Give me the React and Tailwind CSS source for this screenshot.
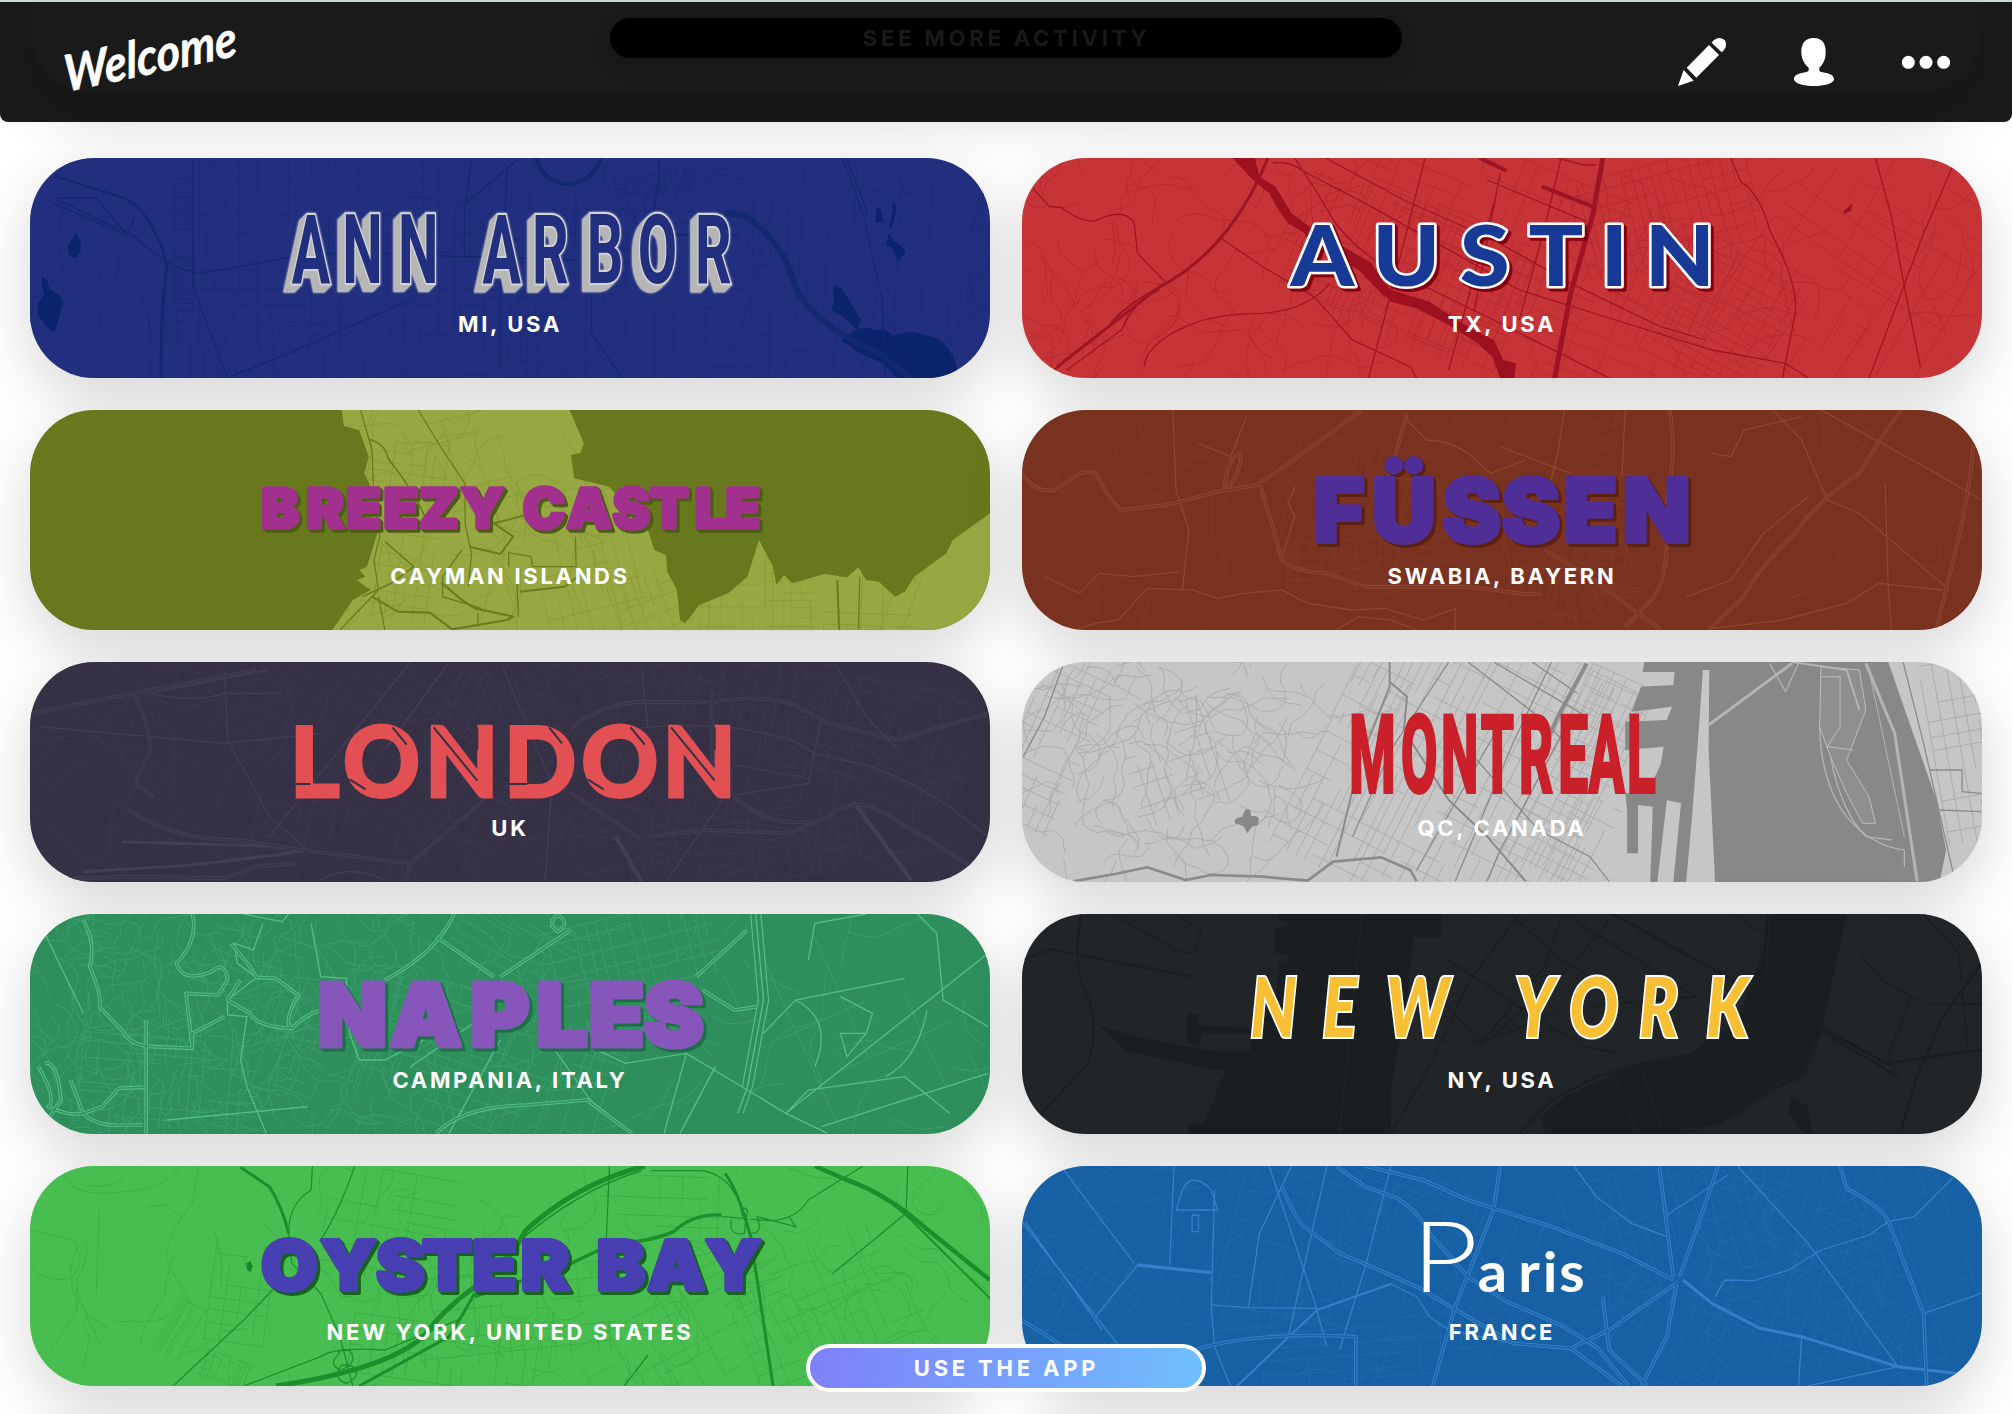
import React from "react";

// Card artwork is described on a 1496 x 660 sheet that is fitted to a 960 x 220 card.
const KX = 960 / 1496;
const KY = 220 / 660;

function random(seed) {
  let s = seed;
  return () => {
    s = (s * 1664525 + 1013904223) % 4294967296;
    return s / 4294967296;
  };
}

// A rotated block of streets: [centre x, centre y, width, height, angle, column gap, row gap, keep]
function blocks(seed, list) {
  const rnd = random(seed);
  let d = "";
  list.forEach(([cx, cy, w, h, angle, gx, gy, keep]) => {
    const c = Math.cos((angle * Math.PI) / 180);
    const s = Math.sin((angle * Math.PI) / 180);
    const p = (x, y) => `${(cx + x * c - y * s).toFixed(1)} ${(cy + x * s + y * c).toFixed(1)}`;
    for (let x = -w / 2; x <= w / 2; x += gx * (0.7 + rnd() * 0.6)) {
      for (let y = -h / 2; y < h / 2; ) {
        const len = gy * (1 + Math.floor(rnd() * 5));
        if (rnd() < keep) d += `M${p(x, y)}L${p(x, Math.min(y + len, h / 2))}`;
        y += len;
      }
    }
    for (let y = -h / 2; y <= h / 2; y += gy * (0.7 + rnd() * 0.6)) {
      for (let x = -w / 2; x < w / 2; ) {
        const len = gx * (1 + Math.floor(rnd() * 5));
        if (rnd() < keep) d += `M${p(x, y)}L${p(Math.min(x + len, w / 2), y)}`;
        x += len;
      }
    }
  });
  return d;
}

// Winding lanes inside a box
function lanes(seed, n, x0, y0, w, h, turn = 0.9) {
  const rnd = random(seed);
  let d = "";
  for (let i = 0; i < n; i++) {
    let x = x0 + rnd() * w;
    let y = y0 + rnd() * h;
    let a = rnd() * 6.28;
    d += `M${x.toFixed(1)} ${y.toFixed(1)}`;
    const steps = 3 + Math.floor(rnd() * 7);
    for (let k = 0; k < steps; k++) {
      a += (rnd() - 0.5) * turn;
      const mx = x + Math.cos(a) * 7;
      const my = y + Math.sin(a) * 7;
      a += (rnd() - 0.5) * turn;
      x = mx + Math.cos(a) * 7;
      y = my + Math.sin(a) * 7;
      d += `Q${mx.toFixed(1)} ${my.toFixed(1)} ${x.toFixed(1)} ${y.toFixed(1)}`;
    }
  }
  return d;
}

const cities = [
  {
    name: "ANN ARBOR", place: "MI, USA", ox: 47, oy: 474, bg: "bg-[#222f7f]",
    thin: "#1d2b78", line: "#12286f", solid: "#0a236c",
    minor: blocks(3, [[300, 90, 330, 200, 0, 14, 15, 0.5], [330, 190, 420, 90, -2, 13, 17, 0.5], [630, 130, 300, 190, 1, 17, 16, 0.45], [650, 22, 130, 26, -5, 6, 6, 0.6], [155, 90, 22, 130, 0, 22, 4, 0.8], [850, 90, 160, 160, 3, 24, 22, 0.4]]) + lanes(5, 90, 0, 0, 960, 220),
    shapes: ["M118 698l8 25 0 30-8 22-10-10-2-25z", "M66 828l8 15 3 25 14 15 8 20-6 45-8 50-12-18-14-35 0-35 10-25-4-30z", "M1390 612Q1400 605 1396 640L1390 685L1385 680Q1394 640 1390 612z", "M1366 625L1372 625L1377 668L1364 666z", "M1385 700l10 25 14 20 2 15-12 24-8-40-10-10z", "M1298 855l14 10 22 70 8 25-6 30-22-40-18-20 4-25z", "M1335 990Q1350 975 1362 990Q1385 985 1392 1008Q1420 985 1440 1005Q1470 1010 1482 1060Q1492 1090 1494 1134L1400 1134L1375 1090L1340 1060L1310 1020z"],
    bold: [["M85 528L195 595Q225 625 245 710Q258 760 260 800Q250 930 251 1134", 2.6], ["M835 474Q848 550 890 553Q925 540 937 474", 4], ["M1130 640L1160 645Q1220 720 1240 860Q1265 970 1370 1060L1420 1134", 6], ["M1027 474Q1030 560 1015 650L1055 705L1150 705", 2]],
    roads: ["M85 595L210 710Q280 830 320 818L400 790L470 765L580 760L720 770L900 780", "M85 610L200 708", "M90 594L150 594L170 640Q190 690 200 700L210 650", "M301 474L301 860L355 1134", "M735 474L726 610L810 474", "M724 610L724 770L780 770L780 1110", "M790 500L785 770", "M922 880L922 1000L970 1134", "M1313 474L1345 640L1375 900L1380 1134", "M1320 474L1352 640", "M640 900L450 1060L360 1130"],
    text: [["ANN ARBOR", [485, 565, 652, 0, 782, 858, 943, 1025, 1112], 849, 97, 0.59, 0]],
    fx: "[filter:drop-shadow(-1px_1px_0_#b6b6b6)_drop-shadow(-2px_2px_0_#b6b6b6)_drop-shadow(-4px_4px_0_#b6b6b6)_drop-shadow(0_0_0.8px_#dcdcdc)]",
    cls: "fill-[#222f7f] stroke-[#d4d4d4] stroke-[4px] font-[Roboto] font-bold [paint-order:stroke]",
  },
  {
    name: "AUSTIN", place: "TX, USA", ox: 25, oy: 474, bg: "bg-[#c63437]",
    thin: "#b62a32", line: "#9f1425", solid: "#9c1020",
    minor: blocks(11, [[490, 110, 420, 210, 22, 12, 14, 0.55], [640, 55, 190, 100, -15, 9, 13, 0.7], [700, 160, 120, 130, 28, 12, 8, 0.6], [800, 120, 150, 200, 35, 26, 20, 0.5], [880, 120, 130, 200, 30, 30, 28, 0.5], [400, 120, 200, 140, 22, 9, 15, 0.6]]) + lanes(12, 80, 0, 0, 330, 220, 1.2) + lanes(13, 30, 560, 0, 400, 220),
    shapes: ["M353 474L388 474L395 530L420 560L445 640L480 690L470 705L440 670L425 630L410 580L385 540z", "M560 790L600 870L660 905L720 980L760 1020L775 1080L795 1090L792 1134L770 1134L758 1070L735 1030L690 975L640 925L600 905L550 800z", "M455 660L490 700L570 790L600 880L590 890L550 810L470 720z", "M1305 635l14-25-2 22-12 10z"],
    bold: [["M408 474Q385 590 345 690Q300 800 240 860L80 1100", 3], ["M250 850Q180 920 160 980L75 1110", 2], ["M240 870Q200 900 180 990L95 1110", 1.5], ["M930 474L915 640L880 880L855 1134", 5], ["M738 474L780 512", 4], ["M835 560L915 620", 4]],
    roads: ["M415 490Q440 480 460 510L560 610L700 760L800 870L950 960L1100 1050L1215 1090L1250 1134", "M498 474L620 600L760 720L880 850L1020 980L1090 1020", "M450 474Q480 560 510 660Q540 740 590 800L760 960L940 1134", "M42 565L68 620L85 622Q120 670 140 662Q185 620 200 670L205 760L250 850", "M335 715L400 800L480 890L540 1020L630 1100L640 1134", "M505 850Q470 930 400 940Q340 940 300 965Q220 1020 215 1100", "M653 474L600 880L565 1134", "M1130 474L1145 545Q1175 580 1190 690Q1235 850 1230 940L1210 1134", "M1355 474L1380 650L1400 860L1425 1100", "M1475 500L1430 700L1385 930L1345 1134", "M760 610L690 1110", "M860 474L900 495L920 495", "M770 520L730 930", "M865 474L840 680L800 960", "M750 540L905 665"],
    text: [["AUSTIN", [493, 624, 746, 857, 948, 1050], 858, 84, 1.08, 0]],
    fx: "[filter:drop-shadow(2px_2px_0_#86000f)_drop-shadow(1px_1px_0_#86000f)]",
    cls: "fill-[#173a96] stroke-white stroke-[5px] [stroke-linejoin:round] font-[Lato] font-black [paint-order:stroke]",
    core: "#173a96",
  },
  {
    name: "BREEZY CASTLE", place: "CAYMAN ISLANDS", ox: 47, oy: 60, bg: "bg-[#68781c]",
    thin: "#8a9b38", line: "#6b7b1d", solid: "#97a843",
    shapes: ["M533 60L888 60L910 160L905 188L890 195L895 265L950 290L975 350L990 400L1010 420L1020 480L1038 495L1040 545L1055 600L1060 690L1068 700L1090 645L1135 610L1165 560L1183 450L1205 530L1210 585L1222 555L1235 580L1285 552L1320 562L1338 532L1350 570L1370 575L1395 620L1410 605L1425 560L1475 490L1485 450L1543 370L1543 720L518 720L550 630L578 600L556 570L570 560L560 540L572 530L590 420L575 370L578 290L568 250L575 200L560 120L536 108z"],
    over: true,
    clip: true,
    minor: blocks(21, [[370, 120, 80, 180, 8, 10, 12, 0.45], [440, 60, 110, 110, -15, 24, 24, 0.5], [560, 170, 100, 110, -14, 15, 17, 0.6], [620, 195, 70, 60, -20, 12, 16, 0.6], [700, 190, 60, 70, 0, 12, 18, 0.6], [760, 185, 50, 80, 0, 9, 9, 0.6], [840, 180, 90, 100, 2, 11, 14, 0.5], [900, 170, 60, 130, 20, 28, 40, 0.4]]) + lanes(22, 40, 330, 0, 260, 220),
    bold: [["M575 148Q600 160 605 205L630 270L655 350L670 410", 1.6], ["M732 470L780 492L800 440L770 400L830 370", 2], ["M565 620L610 580L645 530L600 455", 1.6], ["M580 620L620 665L670 668L705 718", 2.2], ["M688 578L720 630L740 655L800 680L790 690L705 718", 2.2], ["M810 605L880 590L900 560", 2], ["M1305 570L1308 720", 2]],
    roads: ["M562 60L580 180L583 330L592 440L583 510L590 600L560 660L530 720", "M652 60L690 180L725 280L725 400L735 490L730 590", "M720 480L690 560L690 620L750 655", "M897 440L898 530L830 530L828 500L793 488L793 530", "M805 540L808 680", "M1340 560L1338 720", "M590 620L600 720", "M745 670L745 710"],
    text: [["BREEZY CASTLE", [437, 507, 567, 625, 684, 752, 0, 848, 918, 984, 1043, 1108, 1158], 413, 55, 1.03, 0]],
    fx: "[filter:drop-shadow(2px_2px_0_#4d5c15)_drop-shadow(1px_1px_0_#4d5c15)]",
    cls: "fill-[#a2308f] stroke-[#a2308f] stroke-[3.6px] [stroke-linejoin:round] font-[Inter] font-black",
  },
  {
    name: "FÜSSEN", place: "SWABIA, BAYERN", ox: 25, oy: 60, bg: "bg-[#79321f]",
    thin: "#833925", line: "#904631", solid: "#79321f",
    minor: blocks(31, [[340, 100, 150, 130, 12, 15, 17, 0.4], [450, 120, 180, 90, 5, 17, 16, 0.4], [590, 80, 60, 160, 6, 12, 12, 0.5], [300, 150, 70, 60, 0, 10, 12, 0.4], [900, 90, 200, 300, 42, 50, 60, 0.4], [840, 30, 70, 50, 30, 16, 12, 0.4]]) + lanes(32, 26, 480, 180, 150, 36, 1.4) + lanes(33, 45, 0, 0, 960, 220),
    shapes: [],
    bold: [],
    base: "#7c3522",
    double: ["M25 250Q45 310 75 300L100 270Q120 235 140 250Q160 330 180 360L250 345L330 305L390 285L430 235L555 60", "M395 280Q415 400 430 510Q450 545 500 550L560 590L720 590L810 612L835 610", "M340 300Q345 200 365 190Q370 230 345 300", "M1035 60Q1045 200 1030 330Q1035 560 1010 620L965 712", "M1395 60Q1360 150 1330 250Q1260 340 1230 430Q1170 540 1150 620L1095 720", "M1508 160Q1500 330 1480 480L1450 720", "M625 70L595 280", "M840 480Q920 570 950 620L1020 718"],
    roads: ["M625 90L655 150Q690 150 720 190L755 250L810 210", "M450 290L440 340L450 380L430 500", "M375 80L350 200L300 160", "M1195 60L1240 150L1280 330L1330 370L1470 600", "M1370 280L1375 600L1380 720", "M60 560L115 610L145 550L200 560L270 545", "M110 718L140 700L175 690L220 595L290 600L330 625L370 610L430 600L470 640L540 660L590 655L650 690L700 655L700 720", "M515 718L550 680L600 690L640 720", "M770 170L880 250", "M1100 190L1130 200L1150 120L1240 80", "M1100 715L1210 690L1310 640L1360 580L1460 600", "M870 60L860 190L840 340", "M965 60L960 260", "M1270 60L1450 250L1520 330", "M260 60L265 300L285 420L275 600", "M1060 620L1130 570L1180 430L1250 320"],
    text: [["FÜSSEN", [519, 620, 726, 818, 911, 1014], 455, 88, 1.0, 0]],
    fx: "[filter:drop-shadow(2px_2px_0_#5c2013)_drop-shadow(1px_1px_0_#5c2013)]",
    cls: "fill-[#4f2e97] stroke-[#4f2e97] stroke-[4px] [stroke-linejoin:round] font-[Inter] font-black",
  },
  {
    name: "LONDON", place: "UK", ox: 47, oy: 36, bg: "bg-[#363045]",
    thin: "#3d374d", line: "#443e55", solid: "#423b52", base: "#39334a",
    minor: blocks(41, [[350, 60, 330, 200, 28, 10, 13, 0.5], [480, 40, 300, 90, -20, 13, 14, 0.5], [700, 90, 260, 180, 8, 12, 12, 0.45], [830, 60, 220, 130, 20, 14, 11, 0.45], [690, 190, 280, 70, -8, 11, 10, 0.45], [330, 190, 240, 80, 12, 12, 12, 0.4], [80, 110, 170, 200, 40, 30, 36, 0.5], [500, 130, 260, 160, 30, 12, 16, 0.4]]) + lanes(42, 120, 0, 0, 960, 220),
    shapes: [],
    bold: [["M130 665L300 645L430 615L480 600", 3], ["M190 575L440 590", 3], ["M960 560L1000 695", 4], ["M1330 455L1420 690", 4], ["M1100 330L1250 380", 1]],
    double: ["M50 190L220 125L400 60", "M890 235Q940 160 1000 155L1110 158Q1180 130 1240 165L1290 220L1400 270L1450 240L1540 190", "M1010 560L1100 540L1230 550L1290 500Q1320 450 1360 470L1440 560L1540 680", "M60 690L200 680L350 685L400 650L460 640", "M890 430L1000 570", "M205 120Q230 200 235 300L210 400L240 440", "M1110 120L1110 350L1150 450Q1200 530 1260 515", "M200 480Q270 570 370 570L470 600L640 640", "M630 695L640 640L760 440"],
    roads: ["M985 240Q1040 215 1150 235L1230 265L1270 310L1360 350L1420 400L1480 470L1540 560", "M235 130L420 60", "M235 130Q300 160 350 130L440 130", "M350 60L355 270L420 500L480 600", "M60 230L350 280L500 250", "M700 36L600 300", "M780 36L860 400L850 690", "M640 36L420 560", "M500 690Q540 640 600 690", "M1000 60L1010 230", "M1300 36L1350 200L1400 300", "M1040 690L1130 440L1260 400L1280 200"],
    text: [["LONDON", [491, 595, 720, 842, 966, 1090], 442, 98, 0.97, 0]],
    cuts: ["M450 402L484 402", "M612 232L634 284", "M545 388L570 418", "M676 232L744 392", "M744 232L744 300", "M784 402L822 402", "M856 232L876 280", "M983 232L1005 284", "M916 388L941 418", "M1046 232L1114 392", "M1114 232L1114 300"],
    fx: "",
    cls: "fill-[#e35053] stroke-[#e35053] stroke-[3px] font-[Lato] font-black",
  },
  {
    name: "MONTREAL", place: "QC, CANADA", ox: 25, oy: 36, bg: "bg-[#c6c6c6]",
    thin: "#adadad", line: "#8b8b8b", solid: "#888888",
    minor: blocks(51, [[440, 110, 280, 300, 27, 9, 20, 0.7], [350, 40, 60, 70, 27, 8, 14, 0.6], [30, 80, 70, 180, 25, 12, 14, 0.7], [150, 100, 90, 110, -18, 14, 12, 0.4], [580, 60, 80, 100, 24, 8, 14, 0.7], [540, 170, 90, 90, 27, 8, 12, 0.7], [940, 80, 60, 200, -10, 14, 16, 0.6]]) + lanes(52, 95, 30, 0, 250, 200, 1.5),
    shapes: ["M995 36L1375 36L1410 230L1450 450L1465 600L1455 696L1105 696L1095 300L1096 60L1086 60L1080 230L1070 480L1060 696L1040 696L1052 460L1030 450L1015 696L1004 696L1008 470L985 465L985 610L968 610L968 480L965 430L1000 425L1020 345L1025 290L965 300L965 215L1030 210L1038 170L975 185L990 110L1040 105L1042 66L992 66z", "M372 482Q378 472 381 484L382 498Q392 496 394 505L393 525L383 530L376 550L370 528L357 520Q353 505 368 500z"],
    lands: ["M1270 50L1330 60L1340 180L1310 330L1345 440L1355 520L1335 520L1310 430L1285 320L1268 230z"],
    after: true,
    bold: [["M105 694L170 672L220 652L280 690L320 675L400 680L470 692L510 635L585 622L630 660L640 694", 2.6], ["M905 40L860 200L830 330", 4], ["M598 95L625 140L620 240L690 450L750 560L810 694", 2], ["M598 36L598 110L550 340L515 620", 2]],
    roads: ["M90 40L60 200L27 320", "M690 36L600 300L540 560", "M720 36L830 200L900 330", "M780 190L640 660", "M850 36L790 280L700 694", "M820 36L890 130", "M720 300L830 540L910 620L940 694", "M870 240L770 600L750 694", "M760 36L905 200", "M1398 36L1430 280L1475 660L1480 696", "M1440 360L1490 360L1490 425L1520 430", "M1455 480L1520 485"],
    light: [["M1225 40L1095 225", 3], ["M1190 40L1215 125L1235 40", 1.3], ["M1225 36L1310 60L1330 180", 2], ["M1268 230Q1270 400 1310 500Q1350 590 1400 600L1400 650", 1.3], ["M1285 320Q1300 480 1340 560L1380 570", 1.3], ["M1340 40L1385 250L1420 694", 3], ["M1270 80L1300 80L1300 230L1280 290L1320 300", 1.2], ["M1345 60L1400 560", 1]],
    text: [["MONTREAL", [571, 644, 707, 766, 826, 884, 936, 990], 427, 108, 0.49, 0]],
    fx: "",
    cls: "fill-[#ca202a] stroke-[#ca202a] stroke-[4px] font-[Roboto] font-bold",
  },
  {
    name: "NAPLES", place: "CAMPANIA, ITALY", ox: 47, oy: 42, bg: "bg-[#2e8f5c]",
    thin: "#3a9f6a", line: "#56bf88", solid: "#49b27b", base: "#33935f",
    minor: blocks(61, [[600, 40, 180, 80, -14, 12, 14, 0.7], [480, 40, 120, 70, 30, 10, 10, 0.5], [460, 150, 260, 130, 18, 11, 13, 0.5], [600, 115, 80, 40, -14, 5, 4, 0.7], [140, 170, 180, 90, 5, 13, 11, 0.5], [300, 120, 160, 150, 20, 14, 14, 0.4], [820, 110, 190, 190, -24, 60, 45, 0.45]]) + lanes(62, 200, 0, 0, 420, 220, 1.6) + lanes(63, 40, 420, 0, 540, 220),
    shapes: [],
    bold: [["M1178 42L1190 300L1165 560L1150 640", 1.4], ["M1170 42L1182 300L1157 560", 1.2], ["M1186 42L1198 300L1173 560L1158 640", 1.2]],
    double: ["M130 60Q150 130 140 200Q160 290 155 320L190 390Q205 440 240 440L300 445L300 400Q320 380 350 350", "M300 42Q310 120 275 190Q285 250 330 215Q350 180 355 240L340 285L290 280L300 445", "M360 130L390 200L400 232L430 235L465 285Q440 370 455 385Q480 340 500 330", "M455 385Q400 380 390 340L355 300L375 240", "M60 500Q90 600 75 620Q110 650 130 640L160 620L185 565L225 562", "M110 540L130 640Q150 680 190 675L222 675", "M228 360L228 700", "M70 490Q90 480 95 600L75 660L110 700", "M680 700Q720 620 820 615L915 600L985 700", "M708 42Q680 160 600 240", "M680 110L770 230", "M890 90L780 230", "M870 45Q850 70 870 95Q890 70 870 45", "M1165 90L1085 230", "M1095 270L1145 330L1180 320"],
    roads: ["M380 42L440 65L450 42", "M410 70L395 150L365 130L370 190L400 232L355 300L355 345L385 350L375 480L385 560L415 700", "M485 70L500 230L540 235L545 400L560 480L600 480L680 400", "M865 450L920 600L985 700", "M920 440L975 490L1070 460L1225 640L1290 700", "M1225 640L1260 570L1410 530L1480 640", "M1070 460L1035 700", "M1115 500L1060 700", "M1190 400L1240 300L1410 235", "M1240 300Q1300 360 1270 500", "M1225 640L1540 160", "M1445 330Q1430 480 1380 530", "M1540 380L1470 300L1460 100L1430 42", "M1350 42L1270 70L1260 180", "M640 500L760 340", "M780 420L700 700", "M1280 680L1540 520", "M480 620L260 660", "M60 60L130 340", "M1310 290L1360 340L1350 400L1310 400L1320 470L1350 400"],
    text: [["NAPLES", [549, 664, 779, 876, 961, 1050], 437, 87, 1.04, 0]],
    fx: "[filter:drop-shadow(2px_2px_0_#1c7045)_drop-shadow(1px_1px_0_#1c7045)]",
    cls: "fill-[#8756bb] stroke-[#8756bb] stroke-[5px] [stroke-linejoin:round] font-[Inter] font-black",
  },
  {
    name: "NEW YORK", place: "NY, USA", ox: 25, oy: 42, bg: "bg-[#212528]",
    thin: "#1e2225", line: "#1a1e21", solid: "#1a1e21",
    minor: blocks(71, [[500, 100, 200, 260, 28, 26, 34, 0.6], [870, 120, 180, 220, 25, 34, 40, 0.5], [215, 200, 60, 60, 10, 10, 12, 0.5]]),
    shapes: ["M425 42L680 42L678 112L635 112L625 300L600 560L600 702L285 702L283 675L310 665L335 540L345 510L325 510L182 450L175 425L160 405L145 375L200 410L260 432L330 455L380 455L385 400L305 400L300 440L282 430L283 340L300 345L300 375L380 385L420 330L425 190L440 185L440 165L420 160L420 85L448 75L425 60z", "M1185 42L1310 42L1270 400L1245 530L1210 560L1190 580L1130 660L1080 690L1060 702L840 702L835 650L870 590L950 520L1000 490L1060 470L1100 410L1140 370L1180 150z", "M1225 590L1250 620L1257 702L1245 702L1220 640z"],
    bold: [["M118 42Q100 200 130 300Q145 420 125 500L55 640", 2], ["M25 180L70 148L290 230", 2], ["M945 42L1180 290L1375 492L1440 470L1520 450", 3], ["M1250 370L1390 530", 2], ["M1520 190L1460 350L1420 530L1395 690", 2.5], ["M800 700L850 600L920 530L1000 485L1060 465", 2]],
    roads: ["M165 42L270 155L293 160L305 95L265 42", "M868 42L840 200L740 430L680 300", "M785 42L860 170L990 330", "M870 42L1000 200L1075 290L910 320", "M1130 42L1180 100", "M1330 160L1365 240L1430 310L1520 312", "M1430 42L1485 160L1500 470", "M800 42L720 250L660 500L600 702", "M940 60L880 200L740 440", "M1410 290L1375 470L1385 510", "M720 430L780 400L860 330", "M680 170L800 320L900 440L960 460"],
    light: [["M555 42L520 700", 1], ["M650 120L620 420L600 690", 1], ["M990 500L1020 680", 1], ["M950 530L980 690", 1], ["M1190 42L1185 230", 1], ["M1060 690L1110 680L1210 545L1243 525L1262 420", 1], ["M430 190L590 345", 1]],
    text: [["NEW YORK", [417, 520, 641, 0, 824, 916, 1017, 1124], 412, 81, 0.8, 0]],
    fx: "",
    cls: "fill-[#f7bf33] stroke-white stroke-[4px] font-[Lato] font-black italic [paint-order:stroke]",
  },
  {
    name: "OYSTER BAY", place: "NEW YORK, UNITED STATES", ox: 47, oy: 48, bg: "bg-[#49be50]",
    thin: "#3dae46", line: "#1c8f2c", solid: "#178629",
    minor: blocks(81, [[360, 60, 130, 110, 10, 16, 12, 0.5], [480, 150, 220, 90, -6, 17, 15, 0.5], [660, 170, 220, 110, -28, 14, 16, 0.5], [800, 150, 180, 150, -22, 16, 18, 0.5], [150, 165, 30, 60, 30, 3, 90, 0.9], [195, 205, 50, 30, 20, 4, 6, 0.7], [210, 130, 60, 110, 8, 16, 13, 0.5], [630, 40, 120, 60, 2, 18, 14, 0.5], [420, 190, 200, 60, 8, 14, 14, 0.5]]) + lanes(82, 60, 280, 0, 680, 220, 1.6) + lanes(83, 8, 0, 0, 260, 220),
    shapes: ["M390 332l4 15-3 20-6-8-1-18z"],
    bold: [["M1005 48Q900 100 820 240Q790 350 740 410Q690 480 660 560Q600 660 430 708", 5], ["M1270 48L1320 90Q1380 130 1440 230L1543 390", 4.5], ["M1000 62Q900 120 805 280L740 420", 1.6], ["M1125 195Q1080 190 1050 245Q1010 280 960 275L880 350L740 440", 3.4], ["M1130 70Q1150 120 1170 260L1205 708", 3], ["M1330 100Q1370 120 1420 210L1543 445", 2], ["M375 52L420 110Q440 170 450 250", 3], ["M740 430Q720 500 700 560L560 708", 3]],
    roads: ["M1015 62L1095 62Q1130 75 1145 130", "M1345 48L1260 150Q1240 210 1200 212L1125 200", "M553 48Q530 180 500 270", "M487 48L485 120Q450 160 450 250L455 340L500 430L530 560L550 708", "M425 420L380 510L270 708", "M950 48L945 270L960 290", "M1415 48L1412 190L1297 372", "M1010 615L973 708", "M530 610Q510 640 530 660Q560 640 545 600Q520 600 530 610", "M530 650Q520 690 540 700Q565 680 550 650Q535 640 530 650", "M380 708L500 620Q520 590 600 600L720 505", "M1140 210Q1135 260 1160 250L1165 180Q1150 160 1158 200", "M1170 250Q1190 250 1180 200L1240 230L1230 200"],
    lanesBig: "M100 70Q110 130 160 130Q260 125 280 48M47 350Q70 400 110 385Q135 350 115 270L47 240M310 48L300 160Q240 300 270 370L300 470M155 180L150 440M120 410L120 480L80 600M130 520L140 560L130 660M230 170L260 165L285 205",
    text: [["OYSTER BAY", [451, 543, 624, 697, 771, 850, 0, 968, 1054, 1143], 420, 69, 1.06, 0]],
    fx: "[filter:drop-shadow(2px_2px_0_#16631f)_drop-shadow(1px_1px_0_#16631f)]",
    cls: "fill-[#473fb2] stroke-[#473fb2] stroke-[4px] [stroke-linejoin:round] font-[Inter] font-black",
  },
  {
    name: "Paris", place: "FRANCE", ox: 25, oy: 48, bg: "bg-[#1660a3]",
    thin: "#2069af", line: "#3480cb", solid: "#2f7bc6", base: "#1963a8",
    minor: blocks(91, [[60, 110, 130, 200, 32, 14, 20, 0.5], [420, 50, 200, 90, 25, 12, 14, 0.5], [650, 60, 200, 130, -16, 13, 16, 0.5], [770, 100, 200, 180, 22, 13, 14, 0.5], [270, 90, 160, 160, 14, 15, 20, 0.5], [360, 190, 240, 60, -4, 16, 12, 0.4], [620, 170, 160, 100, 30, 14, 15, 0.45], [880, 100, 130, 200, -20, 20, 22, 0.5]]) + lanes(92, 80, 0, 0, 960, 220, 1.2),
    shapes: [],
    bold: [["M1055 390L1100 460L1175 535L1240 560L1390 650L1480 670", 3], ["M205 345L320 368", 3.4], ["M360 708L485 480L600 402", 2]],
    double: ["M560 48L650 90L720 150L850 230L960 310L1040 390", "M515 48L560 110L610 145Q650 200 660 250L720 380L780 455L870 530L920 590L970 708", "M1300 48L1310 115Q1370 180 1375 215L1430 490L1435 708", "M465 230L520 310L570 350L640 410L790 580L880 595L940 540L1045 400", "M1018 48L1040 380", "M1045 400L1030 560L990 708", "M1110 48L1050 380", "M25 510L90 590", "M430 110Q450 200 465 235", "M770 48L760 180L700 470L665 708", "M880 595L960 708", "M930 440L940 600L1000 708", "M250 640Q330 540 545 560L545 708"],
    roads: ["M262 48L255 350", "M325 120L320 465L378 473L485 475", "M205 345L140 500L25 215", "M140 500L175 585", "M445 48L395 250L378 470", "M30 215L150 540", "M885 48L920 140L975 220L1030 260", "M1125 75L1030 195", "M1475 85L1415 200L1375 215L1345 255L1270 300L1220 360L1165 392L1120 390L1105 440", "M1140 48L1250 280L1390 650", "M1430 490L1520 430", "M320 470L325 590L350 708", "M600 402L640 440L660 500L690 540L790 580", "M90 60L200 340", "M1390 650L1250 708", "M1240 560L1235 708", "M410 48L480 450L500 590", "M500 48L440 560", "M275 120Q290 60 320 120L330 180L265 180z", "M290 195L300 195L300 245L290 245z", "M600 48L560 350L520 600"],
    text: [["P", [684], 427, 99, 1.16, 1], ["aris", [758, 815, 848, 882], 427, 55, 1.05, 2]],
    fx: "",
    cls: "fill-white font-[Lato]",
  },
];

function StreetMap({ city, id }) {
  const { ox, oy } = city;
  const sheet = `scale(${KX} ${KY}) translate(${-ox} ${-oy})`;
  const stroke = { fill: "none", vectorEffect: "non-scaling-stroke" };
  const fills = city.shapes.map((d, i) => <path key={i} d={d} fill={city.solid} />);
  return (
    <svg className="absolute inset-0 h-full w-full" viewBox="0 0 960 220" preserveAspectRatio="none" aria-hidden="true">
      {city.clip && (
        <clipPath id={id}>
          <path d={city.shapes[0]} transform={sheet} />
        </clipPath>
      )}
      {city.over && <g transform={sheet}>{fills}</g>}
      <g clipPath={city.clip ? `url(#${id})` : undefined}>
        <path d={city.minor} fill="none" stroke={city.thin} strokeWidth="1" />
        <g transform={sheet}>
          {!city.over && !city.after && fills}
          {city.lanesBig && <path d={city.lanesBig} {...stroke} stroke={city.thin} strokeWidth="1" />}
          <path d={city.roads.join("")} {...stroke} stroke={city.line} strokeWidth="1.3" />
          {city.bold.map(([d, w], i) => (
            <path key={i} d={d} {...stroke} stroke={city.line} strokeWidth={w} strokeLinejoin="round" />
          ))}
          {city.double && (
            <>
              <path d={city.double.join("")} {...stroke} stroke={city.line} strokeWidth="3.6" strokeLinejoin="round" />
              <path d={city.double.join("")} {...stroke} stroke={city.base} strokeWidth="1.5" strokeLinejoin="round" />
            </>
          )}
          {city.after && fills}
          {city.lands?.map((d, i) => (
            <path key={i} d={d} fill="#8f8f8f" stroke="#bdbdbd" strokeWidth="1" vectorEffect="non-scaling-stroke" />
          ))}
          {city.light?.map(([d, w], i) => (
            <path key={i} d={d} {...stroke} stroke={city.after ? "#b4b4b4" : "#23272a"} strokeWidth={w} />
          ))}
        </g>
      </g>
    </svg>
  );
}

const weights = ["", "font-light", "font-bold"];

function Lettering({ city }) {
  return (
    <svg className="absolute inset-0 h-full w-full" viewBox="0 0 960 220" role="img" aria-label={city.name}>
      <g className={city.fx}>
        {city.text.map(([chars, centres, base, size, sx, weight]) => (
          <text
            key={chars}
            className={`${city.cls} ${weights[weight]}`}
            textAnchor="middle"
            fontSize={size}
            transform={`scale(${sx} 1)`}
            x={centres.map((c, i) => (((c || (centres[i - 1] + centres[i + 1]) / 2) - city.ox) * KX) / sx).join(" ")}
            y={(base - city.oy) * KY}
          >
            {chars}
          </text>
        ))}
      </g>
      {city.cuts && (
        <path
          d={city.cuts.join("")}
          transform={`scale(${KX} ${KY}) translate(${-city.ox} ${-city.oy})`}
          className="fill-none stroke-[#363045] stroke-[2px] [vector-effect:non-scaling-stroke]"
        />
      )}
    </svg>
  );
}

function CityCard({ city, id }) {
  return (
    <a className={`relative flex h-[220px] flex-col items-center justify-end overflow-hidden rounded-[64px] pb-[40px] shadow-[0_20px_60px_rgba(0,0,0,0.16)] ${city.bg}`}>
      <StreetMap city={city} id={id} />
      <Lettering city={city} />
      <p className="relative font-[Inter] text-[22px] leading-[28px] font-bold tracking-[2.7px] text-white">{city.place}</p>
    </a>
  );
}

function Pencil() {
  return (
    <svg className="size-12 fill-white" viewBox="114 84 144 144">
      <path d="M131 180L161 212L114 228z" />
      <path d="M207 105L237 135L169 203L140 173z" />
      <path d="M215 98Q225 84 239 84Q258 86 258 103Q258 117 245 127z" />
    </svg>
  );
}

function Person() {
  return (
    <svg className="size-12 fill-white" viewBox="450 84 144 144">
      <path d="M521 84C546 84 558 100 557 128C557 148 549 163 538 173V183C546 189 582 188 582 207C582 221 552 228 522 228S462 221 462 207C462 188 498 189 506 183V173C494 163 485 148 484 128C483 100 496 84 521 84z" />
    </svg>
  );
}

function Dots() {
  return (
    <svg className="size-12 fill-white" viewBox="786 84 144 144">
      <circle cx="805" cy="157" r="19.5" />
      <circle cx="858" cy="157" r="19.5" />
      <circle cx="911" cy="157" r="19.5" />
    </svg>
  );
}

export default function App() {
  return (
    <div className="relative h-[1414px] w-full overflow-hidden bg-white">
      <div className="mx-[30px] h-[94px] rounded-b-[64px] shadow-[0_20px_60px_rgba(0,0,0,0.18)]" />

      <main className="mt-16 grid grid-cols-2 gap-x-8 gap-y-8 px-[30px]">
        {cities.map((city, i) => (
          <CityCard key={city.name} city={city} id={`land-${i}`} />
        ))}
        <div className="h-[220px] rounded-[64px] shadow-[0_20px_60px_rgba(0,0,0,0.16)]" />
        <div className="h-[220px] rounded-[64px] shadow-[0_20px_60px_rgba(0,0,0,0.16)]" />
      </main>

      <header className="absolute inset-x-0 top-0 h-[122px] overflow-hidden rounded-b-[8px] border-t-2 border-[#cfd6da] bg-[#191919]">
        <div className="mx-[30px] h-[92px] rounded-b-[64px] bg-[#1a1a1a] shadow-[0_20px_50px_rgba(0,0,0,0.12)]" />
        <div className="absolute inset-x-0 top-[16px] flex justify-center">
          <button className="h-10 w-[792px] rounded-full bg-black pl-[1px] font-[Inter] text-[22px] font-bold tracking-[3.8px] text-[#1a1a1a] shadow-[0_8px_20px_rgba(0,0,0,0.12)]">
            SEE MORE ACTIVITY
          </button>
        </div>
        <div className="absolute inset-x-0 top-0 flex h-[120px] items-center justify-between pr-[62px] pl-[54px]">
          <svg className="h-[100px] w-[200px] overflow-visible" viewBox="0 0 200 100" role="img" aria-label="Welcome">
            <text
              className="fill-white stroke-white stroke-[0.6px] font-[Lato] text-[50px] font-bold italic"
              transform="translate(12 80) rotate(-12) skewX(-6)"
              textLength="176"
              lengthAdjust="spacingAndGlyphs"
            >
              Welcome
            </text>
          </svg>
          <nav className="flex items-center gap-16">
            <Pencil />
            <Person />
            <Dots />
          </nav>
        </div>
      </header>

      <div className="absolute inset-x-0 top-[1344px] flex justify-center">
        <button className="h-12 w-[400px] rounded-full border-4 border-white bg-[linear-gradient(100deg,#7f7ff9,#6fc0fc)] bg-origin-border pl-[1px] font-[Inter] text-[22px] leading-none font-bold tracking-[3.8px] text-white">
          USE THE APP
        </button>
      </div>
    </div>
  );
}
